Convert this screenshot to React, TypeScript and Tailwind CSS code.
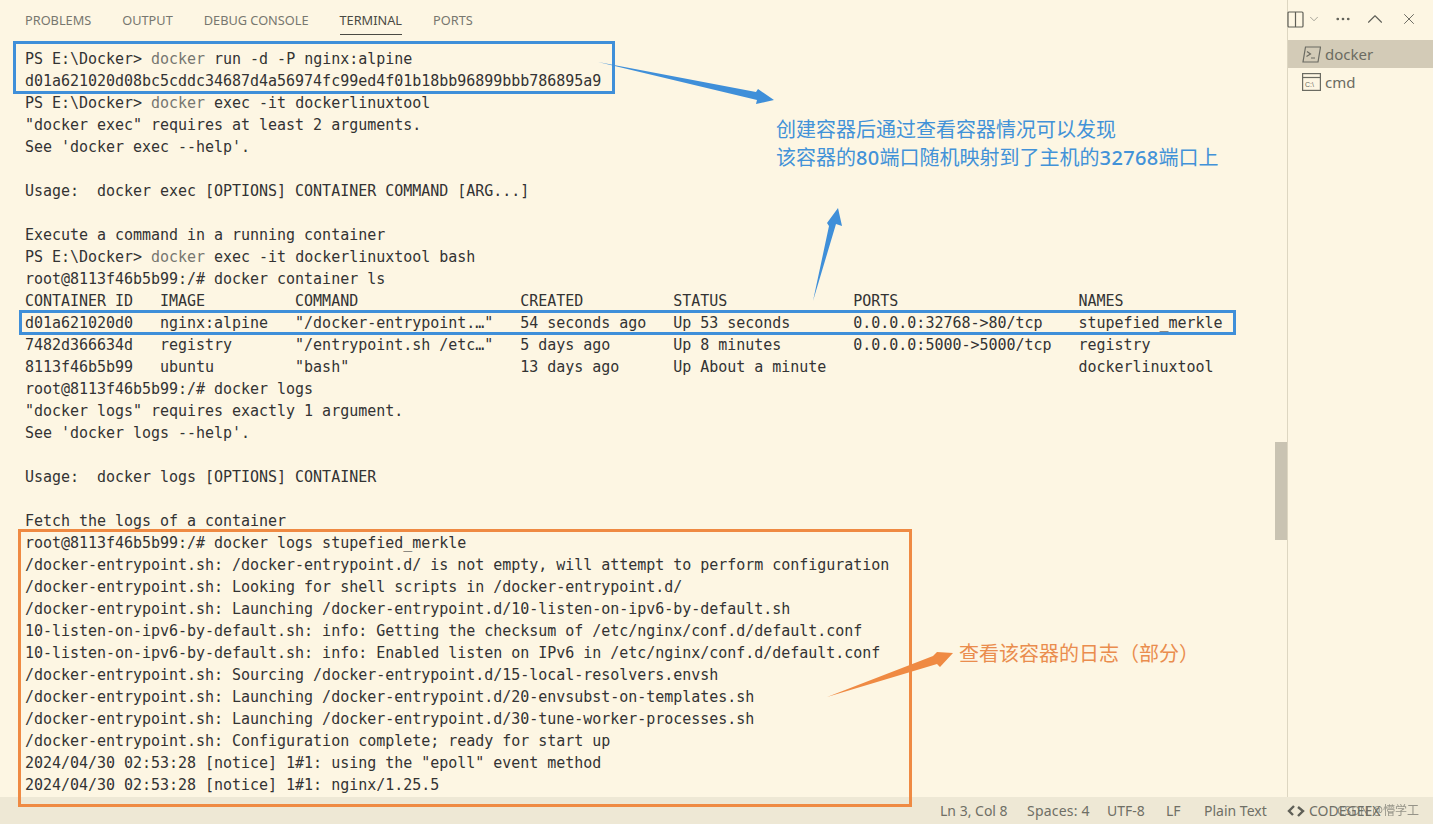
import React from 'react';
import { X, ChevronUp, ChevronDown, Ellipsis } from 'lucide-react';

// "docker" after the PS prompt is dimmer in the terminal, so split those lines
const lines: (string | { cmd: string })[] = [
  { cmd: ' run -d -P nginx:alpine' },
  'd01a621020d08bc5cddc34687d4a56974fc99ed4f01b18bb96899bbb786895a9',
  { cmd: ' exec -it dockerlinuxtool' },
  '"docker exec" requires at least 2 arguments.',
  "See 'docker exec --help'.",
  '',
  'Usage:  docker exec [OPTIONS] CONTAINER COMMAND [ARG...]',
  '',
  'Execute a command in a running container',
  { cmd: ' exec -it dockerlinuxtool bash' },
  'root@8113f46b5b99:/# docker container ls',
  'CONTAINER ID   IMAGE          COMMAND                  CREATED          STATUS              PORTS                    NAMES',
  'd01a621020d0   nginx:alpine   "/docker-entrypoint.…"   54 seconds ago   Up 53 seconds       0.0.0.0:32768->80/tcp    stupefied_merkle',
  '7482d366634d   registry       "/entrypoint.sh /etc…"   5 days ago       Up 8 minutes        0.0.0.0:5000->5000/tcp   registry',
  '8113f46b5b99   ubuntu         "bash"                   13 days ago      Up About a minute                            dockerlinuxtool',
  'root@8113f46b5b99:/# docker logs',
  '"docker logs" requires exactly 1 argument.',
  "See 'docker logs --help'.",
  '',
  'Usage:  docker logs [OPTIONS] CONTAINER',
  '',
  'Fetch the logs of a container',
  'root@8113f46b5b99:/# docker logs stupefied_merkle',
  '/docker-entrypoint.sh: /docker-entrypoint.d/ is not empty, will attempt to perform configuration',
  '/docker-entrypoint.sh: Looking for shell scripts in /docker-entrypoint.d/',
  '/docker-entrypoint.sh: Launching /docker-entrypoint.d/10-listen-on-ipv6-by-default.sh',
  '10-listen-on-ipv6-by-default.sh: info: Getting the checksum of /etc/nginx/conf.d/default.conf',
  '10-listen-on-ipv6-by-default.sh: info: Enabled listen on IPv6 in /etc/nginx/conf.d/default.conf',
  '/docker-entrypoint.sh: Sourcing /docker-entrypoint.d/15-local-resolvers.envsh',
  '/docker-entrypoint.sh: Launching /docker-entrypoint.d/20-envsubst-on-templates.sh',
  '/docker-entrypoint.sh: Launching /docker-entrypoint.d/30-tune-worker-processes.sh',
  '/docker-entrypoint.sh: Configuration complete; ready for start up',
  '2024/04/30 02:53:28 [notice] 1#1: using the "epoll" event method',
  '2024/04/30 02:53:28 [notice] 1#1: nginx/1.25.5',
];

const tabs = ['PROBLEMS', 'OUTPUT', 'DEBUG CONSOLE', 'TERMINAL', 'PORTS'];
const status = ['Ln 3, Col 8', 'Spaces: 4', 'UTF-8', 'LF', 'Plain Text'];

const uiFont = "font-['Noto_Sans','Noto_Sans_CJK_SC',sans-serif]";

export default function App() {
  return (
    <div className={`relative flex flex-col w-[1433px] h-[824px] overflow-hidden bg-[#fdf6e3] ${uiFont}`}>
      <div className="flex flex-1 min-h-0">
        {/* Terminal panel */}
        <div className="flex-1 min-w-0 flex flex-col">
          <div className="flex h-[40px] gap-[31px] pl-[25px] text-[12.75px] text-[#77776f]">
            {tabs.map(t => (
              <div key={t} className={`flex items-center h-[29px] mt-[6px] pt-[1px] border-b ${t === 'TERMINAL' ? 'text-[#4a4a44] border-[#4a4a44]' : 'border-transparent'}`}>
                {t}
              </div>
            ))}
          </div>
          <div className="pt-[8px] pl-[25px] font-['DejaVu_Sans_Mono',monospace] text-[15px] tracking-[-0.027px] leading-[22px] text-[#333333] whitespace-pre">
            {lines.map((l, i) => (
              <div key={i} className="h-[22px]">
                {typeof l === 'string' ? l : (
                  <>PS E:\Docker&gt; <span className="text-[#777770]">docker</span>{l.cmd}</>
                )}
              </div>
            ))}
          </div>
        </div>

        {/* Terminal list */}
        <div className="w-[146px] border-l border-[#ddd6c1] flex flex-col pt-[40px] text-[15px] text-[#6b6b62]">
          <div className="flex items-center h-[28px] pl-[14px] gap-[4px] bg-[#d3cbb7]">
            <svg width="19" height="17" viewBox="0 0 19 17" fill="none" stroke="#6b6b62" strokeWidth="1.2">
              <path d="M3.5 1h15l-2.5 15H1z" />
              <path d="M5 5.5l3.5 2.5L4.5 10.5M9 12h4" />
            </svg>
            docker
          </div>
          <div className="flex items-center h-[28px] pl-[14px] gap-[4px]">
            <svg width="19" height="18" viewBox="0 0 19 18" fill="none" stroke="#6b6b62" strokeWidth="1.2">
              <rect x="0.6" y="0.6" width="17.8" height="16.8" />
              <path d="M0.6 4.5h17.8" />
              <text x="3" y="13.5" fontSize="7" fill="#6b6b62" stroke="none" fontFamily="Liberation Sans">C:\</text>
            </svg>
            cmd
          </div>
        </div>
      </div>

      {/* Status bar */}
      <div className="flex items-center h-[27px] shrink-0 bg-[#eee8d5] text-[14px] text-[#6f6f66] pl-[940px]">
        <span className="w-[87px]">{status[0]}</span>
        <span className="w-[80px] tracking-[0.2px]">{status[1]}</span>
        <span className="w-[59px]">{status[2]}</span>
        <span className="w-[38px]">{status[3]}</span>
        <span className="w-[83px] whitespace-nowrap">{status[4]}</span>
        <svg width="18" height="12" viewBox="0 0 18 12" fill="none" stroke="#5f5f57" strokeWidth="2.4" className="mr-[4px]">
          <path d="M7 1L2 6l4 4M11 2l5 4-5 5" />
        </svg>
        <span className="whitespace-nowrap">CODEGEEX</span>
      </div>

      {/* Top right actions */}
      <div className="absolute top-[6px] left-[1287px] flex items-center text-[#5f5f57]">
        <svg width="17" height="18" viewBox="0 0 17 18" fill="none" stroke="currentColor" strokeWidth="1.2">
          <rect x="1" y="2" width="15" height="15" rx="1" />
          <path d="M8.5 2v15" />
        </svg>
        <ChevronDown size={14} strokeWidth={1.1} className="ml-[3px] text-[#77776f]" />
        <Ellipsis size={18} strokeWidth={1.6} className="ml-[13px]" />
        <ChevronUp size={26} strokeWidth={1} className="ml-[10px]" />
        <X size={18} strokeWidth={1.2} className="ml-[12px]" />
      </div>

      {/* Scrollbar thumb */}
      <div className="absolute left-[1275px] top-[442px] w-[12px] h-[98px] bg-[#c9c3b2]" />

      {/* Annotations */}
      <div className="absolute left-[13px] top-[41px] w-[602px] h-[53px] border-[3px] border-[#3f8fd9]" />
      <div className="absolute left-[19px] top-[310px] w-[1217px] h-[25px] border-[3px] border-[#3f8fd9]" />
      <div className="absolute left-[18px] top-[529px] w-[894px] h-[278px] border-[3px] border-[#ef8a43]" />

      <svg className="absolute inset-0 pointer-events-none" width="1433" height="824">
        <polygon points="598,62 756,92 758,89 774,100 756,104 757,100" fill="#3f8fd9" />
        <polygon points="813,301 829,226 827,223 838,208 842,226 836,224" fill="#3f8fd9" />
        <polygon points="827,697 933,656 937,652 953,653 940,667 937,664" fill="#ef8a43" />
      </svg>

      <div className="absolute left-[776px] top-[115px] text-[20px] leading-[28px] text-[#4292d8] font-['Noto_Sans_CJK_SC',sans-serif] whitespace-pre">
        <div>创建容器后通过查看容器情况可以发现</div>
        <div>
          该容器的<span className="font-['Noto_Sans',sans-serif] font-medium tracking-[0.35px]">80</span>端口随机映射到了主机的<span className="font-['Noto_Sans',sans-serif] font-medium tracking-[0.35px]">32768</span>端口上
        </div>
      </div>
      <div className="absolute left-[959px] top-[639px] text-[20px] leading-[28px] text-[#ea8d4e] font-['Noto_Sans_CJK_SC',sans-serif] whitespace-pre">
        查看该容器的日志（部分）
      </div>

      {/* Image host watermark over the status bar */}
      <div className="absolute left-[1337px] top-[802px] text-[12px] text-[#6f6f66]/70 blur-[0.6px] whitespace-pre">
        CSDN @懵学工
      </div>
    </div>
  );
}
